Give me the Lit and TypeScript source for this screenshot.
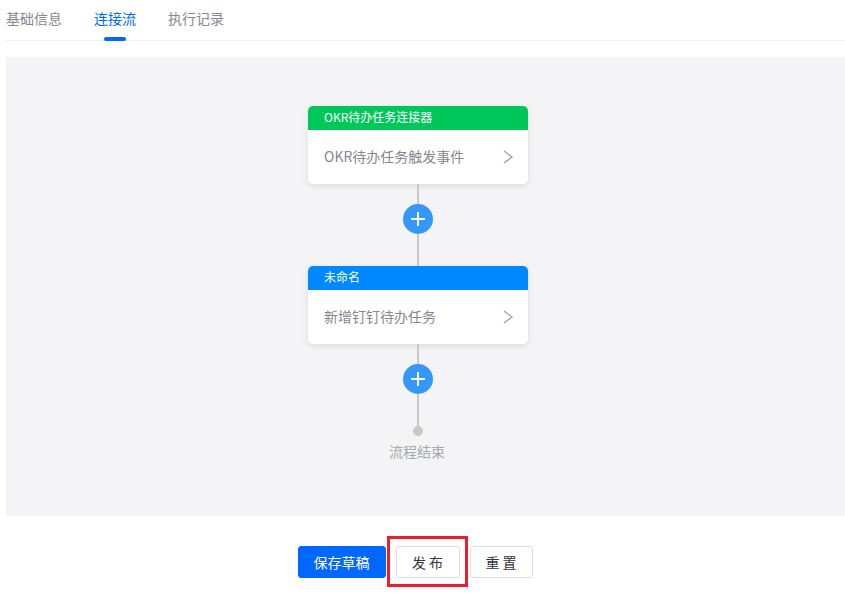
import { LitElement, html, css } from "lit";
import { customElement } from "lit/decorators.js";

@customElement("app-root")
export class AppRoot extends LitElement {
  static styles = css`
    :host {
      display: block;
      width: 845px;
      height: 595px;
      background: #fff;
      overflow: hidden;
      font-family: "Noto Sans CJK SC", sans-serif;
      font-size: 14px;
      box-sizing: border-box;
      padding-left: 6px;
    }
    .tabs {
      display: flex;
      gap: 32px;
      height: 41px;
      box-sizing: border-box;
      border-bottom: 1px solid #eeeff2;
    }
    .tab {
      position: relative;
      height: 40px;
      line-height: 36px;
      color: #85888e;
    }
    .tab.active { color: #0067ff; }
    .tab.active::after {
      content: "";
      position: absolute;
      left: 10px;
      right: 10px;
      bottom: -1px;
      height: 4px;
      border-radius: 2px;
      background: #0067ff;
    }
    .canvas {
      margin-top: 16px;
      height: 459px;
      background: #f4f4f7;
      display: flex;
      flex-direction: column;
      align-items: center;
      box-sizing: border-box;
      padding: 49px 15px 0 0;
    }
    .card {
      width: 220px;
      height: 78px;
      background: #fff;
      border-radius: 5px;
      box-shadow: 0 2px 6px rgba(0, 0, 0, 0.1);
      overflow: hidden;
      flex: none;
    }
    .head {
      height: 24px;
      line-height: 22px;
      padding-left: 16px;
      font-size: 12px;
      color: #fff;
    }
    .head.green { background: #00c75a; }
    .head.blue { background: #0089ff; }
    .body {
      height: 54px;
      display: flex;
      align-items: center;
      justify-content: space-between;
      padding: 0 14px 2px 16px;
      box-sizing: border-box;
      color: #85888e;
    }
    .body svg { display: block; margin-top: 2px; }
    .line { width: 2px; background: #c8c8ca; flex: none; }
    .l20 { height: 20px; }
    .l32 { height: 32px; }
    .plus {
      width: 30px;
      height: 30px;
      border-radius: 50%;
      background: #3597fb;
      flex: none;
      display: flex;
      align-items: center;
      justify-content: center;
    }
    .dot {
      width: 10px;
      height: 10px;
      border-radius: 50%;
      background: #c8c8ca;
      flex: none;
    }
    .end {
      margin-top: 5px;
      padding-right: 2px;
      line-height: 20px;
      color: #a6a8ad;
    }
    .actions {
      margin-top: 30px;
      display: flex;
      justify-content: center;
      gap: 10px;
      padding-right: 21px;
    }
    .btn {
      position: relative;
      height: 32px;
      box-sizing: border-box;
      border-radius: 3px;
      font: inherit;
      line-height: 30px;
      padding: 0;
      text-align: center;
      background: #fff;
      border: 1px solid #dcdde0;
      color: #33363b;
    }
    .primary {
      width: 88px;
      background: #0067ff;
      border-color: #0067ff;
      color: #fff;
    }
    .plain { width: 64px; }
    .reset { width: 63px; }
    .marked::after {
      content: "";
      position: absolute;
      left: -10px;
      top: -11px;
      width: 81px;
      height: 51px;
      box-sizing: border-box;
      border: 3px solid #ee1c2e;
    }
  `;

  private chevron() {
    return html`<svg width="12" height="14" viewBox="0 0 12 14" fill="none">
      <path d="M2 1 L10 7 L2 13" stroke="#a3a3a6" stroke-width="1.4" />
    </svg>`;
  }

  private plusIcon() {
    return html`<svg width="16" height="16" viewBox="0 0 16 16">
      <path d="M8 1 V15 M1 8 H15" stroke="#fff" stroke-width="2" />
    </svg>`;
  }

  render() {
    return html`
      <div class="tabs">
        <div class="tab">基础信息</div>
        <div class="tab active">连接流</div>
        <div class="tab">执行记录</div>
      </div>
      <div class="canvas">
        <div class="card">
          <div class="head green">OKR待办任务连接器</div>
          <div class="body"><span>OKR待办任务触发事件</span>${this.chevron()}</div>
        </div>
        <div class="line l20"></div>
        <div class="plus">${this.plusIcon()}</div>
        <div class="line l32"></div>
        <div class="card">
          <div class="head blue">未命名</div>
          <div class="body"><span>新增钉钉待办任务</span>${this.chevron()}</div>
        </div>
        <div class="line l20"></div>
        <div class="plus">${this.plusIcon()}</div>
        <div class="line l32"></div>
        <div class="dot"></div>
        <div class="end">流程结束</div>
      </div>
      <div class="actions">
        <button class="btn primary">保存草稿</button>
        <button class="btn plain marked">发 布</button>
        <button class="btn reset">重 置</button>
      </div>
    `;
  }
}
